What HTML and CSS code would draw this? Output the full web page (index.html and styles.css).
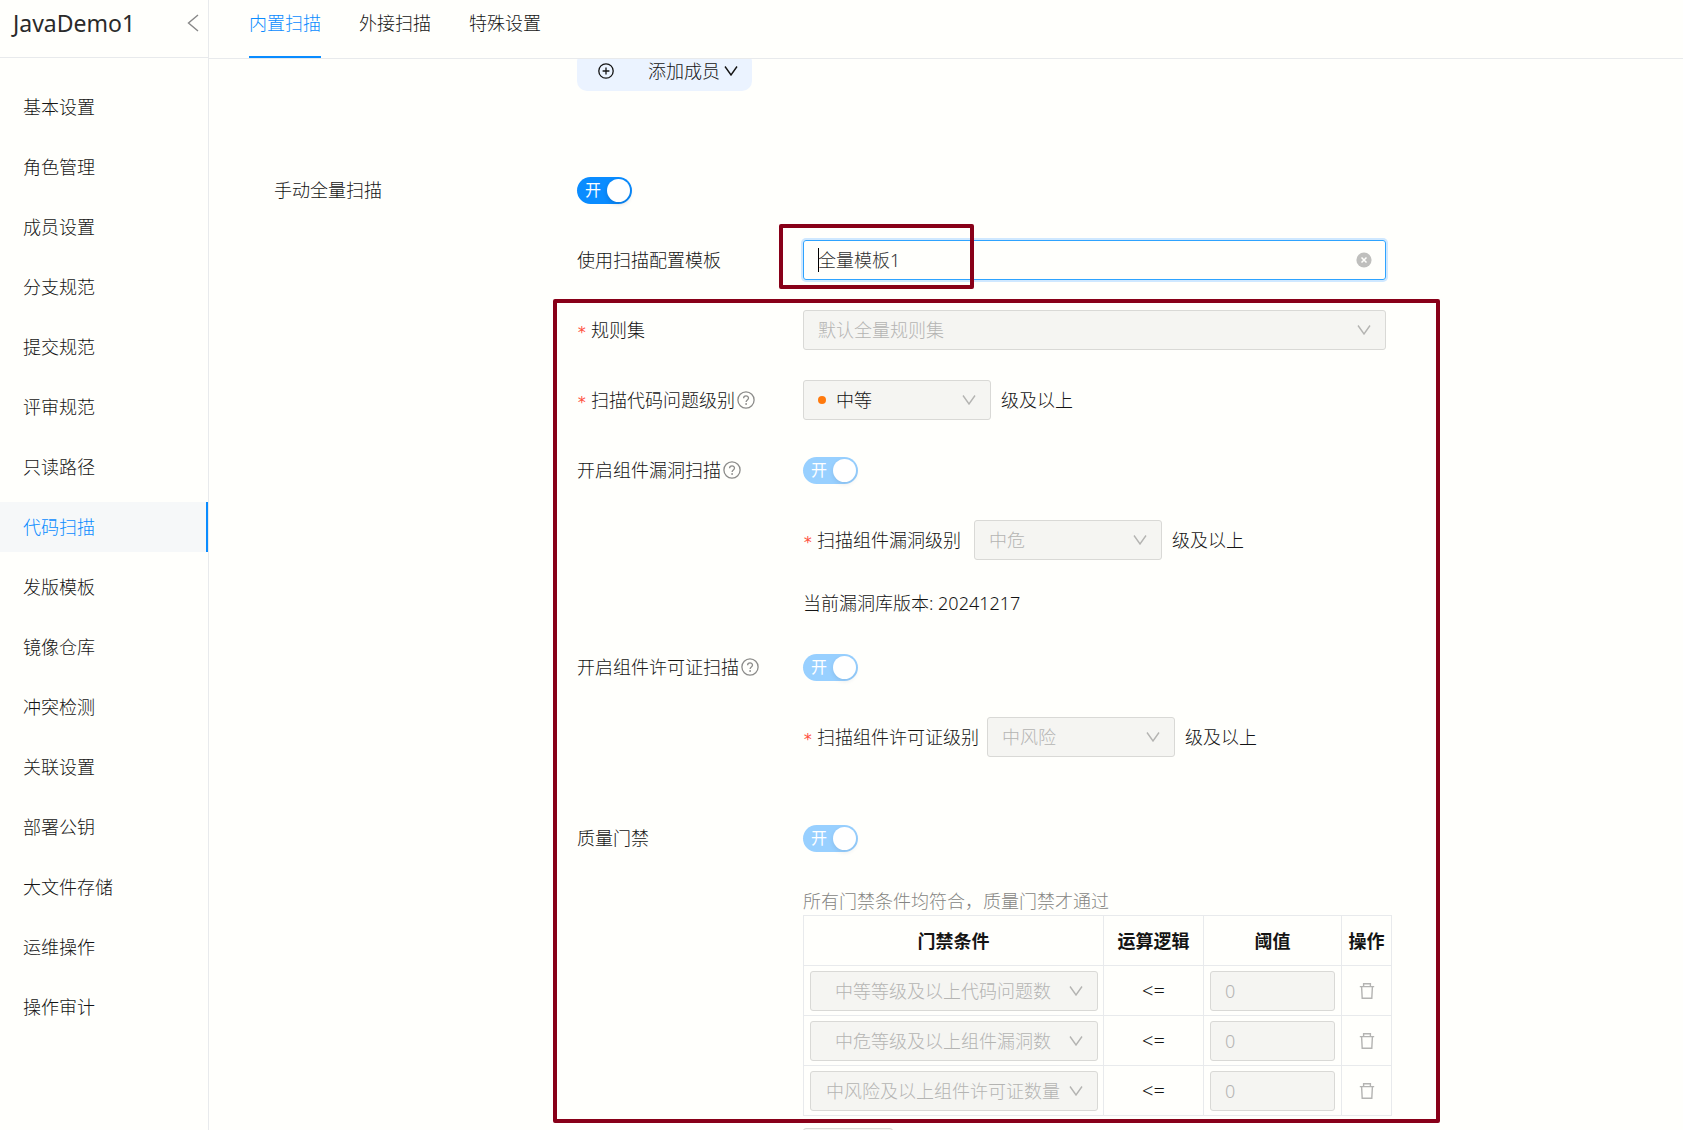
FILE: index.html
```html
<!DOCTYPE html>
<html lang="zh-CN">
<head>
<meta charset="utf-8">
<meta name="viewport" content="width=device-width, initial-scale=1">
<title>JavaDemo1 - 代码扫描</title>
<link rel="stylesheet" href="styles.css">
</head>
<body>
<svg class="sprite" aria-hidden="true">
  <symbol id="down" viewBox="0 0 14 10"><path d="M1 0.5 L7 9 L13 0.5" fill="none" stroke="currentColor" stroke-width="1.4"/></symbol>
  <symbol id="help" viewBox="0 0 18 18"><circle cx="9" cy="9" r="8.1" fill="none" stroke="currentColor" stroke-width="1.3"/><path d="M6.6 7.3 C6.6 4.1 11.5 4.2 11.5 7.1 C11.5 9 9.1 8.9 9.1 11" fill="none" stroke="currentColor" stroke-width="1.3"/><circle cx="9.1" cy="13" r="0.9" fill="currentColor"/></symbol>
  <symbol id="trash" viewBox="0 0 16 16"><path d="M0.8 3.6 H15.2 M4.6 3.4 V0.8 H11.4 V3.4 M2.6 3.8 L3.2 15.2 H12.8 L13.4 3.8" fill="none" stroke="currentColor" stroke-width="1.4"/></symbol>
</svg>
<div class="app">
  <aside class="sidebar">
    <header class="sidebar-head">
      <h1 class="project">JavaDemo1</h1>
      <button class="collapse" type="button" aria-label="收起">
        <svg width="12" height="18" viewBox="0 0 12 18"><path d="M11 1 L1.5 9 L11 17" fill="none" stroke="currentColor" stroke-width="1.4"/></svg>
      </button>
    </header>
    <nav class="menu">
      <a class="menu-item" href="#">基本设置</a>
      <a class="menu-item" href="#">角色管理</a>
      <a class="menu-item" href="#">成员设置</a>
      <a class="menu-item" href="#">分支规范</a>
      <a class="menu-item" href="#">提交规范</a>
      <a class="menu-item" href="#">评审规范</a>
      <a class="menu-item" href="#">只读路径</a>
      <a class="menu-item active" href="#" aria-current="page">代码扫描</a>
      <a class="menu-item" href="#">发版模板</a>
      <a class="menu-item" href="#">镜像仓库</a>
      <a class="menu-item" href="#">冲突检测</a>
      <a class="menu-item" href="#">关联设置</a>
      <a class="menu-item" href="#">部署公钥</a>
      <a class="menu-item" href="#">大文件存储</a>
      <a class="menu-item" href="#">运维操作</a>
      <a class="menu-item" href="#">操作审计</a>
    </nav>
  </aside>

  <main class="main">
    <nav class="tabs">
      <a class="tab active" href="#">内置扫描</a>
      <a class="tab" href="#">外接扫描</a>
      <a class="tab" href="#">特殊设置</a>
    </nav>
    <div class="content">
      <div class="section members">
        <div class="section-body">
          <button class="add-member" type="button">
            <svg width="16" height="16" viewBox="0 0 16 16"><circle cx="8" cy="8" r="7.2" fill="none" stroke="currentColor" stroke-width="1.3"/><path d="M8 4.6 V11.4 M4.6 8 H11.4" stroke="currentColor" stroke-width="1.3"/></svg>
            <span class="add-member-text">添加成员</span>
            <svg width="14" height="10"><use href="#down"/></svg>
          </button>
        </div>
      </div>

      <div class="section">
        <label class="section-label" for="full-scan">手动全量扫描</label>
        <div class="section-body rows">
          <div class="row"><label class="switch"><input id="full-scan" type="checkbox" checked><span>开</span></label></div>
          <div class="row">
            <label class="label" for="template">使用扫描配置模板</label>
            <div class="combo">
              <i class="caret"></i>
              <input id="template" class="combo-input" type="text" value="全量模板1">
              <button class="clear" type="button" aria-label="清除">
                <svg width="16" height="16" viewBox="0 0 16 16"><circle cx="8" cy="8" r="7.6" fill="#bfbfbd"/><path d="M5.5 5.5 L10.5 10.5 M10.5 5.5 L5.5 10.5" stroke="#fffffc" stroke-width="1.5"/></svg>
              </button>
              <div class="mark mark-template"></div>
            </div>
          </div>

          <div class="rows group">
            <div class="row">
              <label class="label" for="rules"><b class="star">*</b>规则集</label>
              <div class="select wide"><select id="rules" disabled><option>默认全量规则集</option></select><svg><use href="#down"/></svg></div>
            </div>
            <div class="row">
              <label class="label" for="code-level"><b class="star">*</b>扫描代码问题级别<svg class="help"><use href="#help"/></svg></label>
              <div class="field">
                <div class="select level dotted"><i class="dot"></i><select id="code-level" disabled><option>中等</option></select><svg><use href="#down"/></svg></div>
                <span>级及以上</span>
              </div>
            </div>
            <div class="row">
              <label class="label" for="vuln">开启组件漏洞扫描<svg class="help"><use href="#help"/></svg></label>
              <label class="switch"><input id="vuln" type="checkbox" checked disabled><span>开</span></label>
            </div>
            <div class="row">
              <div class="field sub">
                <label class="field-label" for="vuln-level"><b class="star">*</b>扫描组件漏洞级别</label>
                <div class="select level"><select id="vuln-level" disabled><option>中危</option></select><svg><use href="#down"/></svg></div>
                <span class="suffix">级及以上</span>
              </div>
            </div>
            <p class="version">当前漏洞库版本: 20241217</p>
            <div class="row">
              <label class="label" for="license">开启组件许可证扫描<svg class="help"><use href="#help"/></svg></label>
              <label class="switch"><input id="license" type="checkbox" checked disabled><span>开</span></label>
            </div>
            <div class="row">
              <div class="field sub">
                <label class="field-label" for="license-level"><b class="star">*</b>扫描组件许可证级别</label>
                <div class="select level"><select id="license-level" disabled><option>中风险</option></select><svg><use href="#down"/></svg></div>
                <span class="suffix">级及以上</span>
              </div>
            </div>
            <div class="row gate-row">
              <label class="label" for="gate">质量门禁</label>
              <label class="switch"><input id="gate" type="checkbox" checked disabled><span>开</span></label>
            </div>
            <div class="gate">
              <p class="hint">所有门禁条件均符合，质量门禁才通过</p>
              <table class="gate-table">
                <colgroup><col class="c-cond"><col class="c-op"><col class="c-val"><col class="c-act"></colgroup>
                <thead><tr><th>门禁条件</th><th>运算逻辑</th><th>阈值</th><th>操作</th></tr></thead>
                <tbody>
                  <tr>
                    <td><div class="select cond"><select aria-label="门禁条件" disabled><option>中等等级及以上代码问题数</option></select><svg><use href="#down"/></svg></div></td>
                    <td class="op">&lt;=</td>
                    <td><input class="num" aria-label="阈值" type="text" value="0" disabled></td>
                    <td><button class="trash" type="button" aria-label="删除" disabled><svg><use href="#trash"/></svg></button></td>
                  </tr>
                  <tr>
                    <td><div class="select cond"><select aria-label="门禁条件" disabled><option>中危等级及以上组件漏洞数</option></select><svg><use href="#down"/></svg></div></td>
                    <td class="op">&lt;=</td>
                    <td><input class="num" aria-label="阈值" type="text" value="0" disabled></td>
                    <td><button class="trash" type="button" aria-label="删除" disabled><svg><use href="#trash"/></svg></button></td>
                  </tr>
                  <tr>
                    <td><div class="select cond"><select aria-label="门禁条件" disabled><option>中风险及以上组件许可证数量</option></select><svg><use href="#down"/></svg></div></td>
                    <td class="op">&lt;=</td>
                    <td><input class="num" aria-label="阈值" type="text" value="0" disabled></td>
                    <td><button class="trash" type="button" aria-label="删除" disabled><svg><use href="#trash"/></svg></button></td>
                  </tr>
                </tbody>
              </table>
            </div>
            <div class="mark mark-group"></div>
          </div>
          <button class="add-cond" type="button" aria-label="新增" disabled></button>
        </div>
      </div>
    </div>
  </main>
</div>
</body>
</html>
```
FILE: styles.css
```css
:root {
  --bg: #fffffc;
  --text: #141414;
  --muted: #b4b4b2;
  --line: #e8eaec;
  --border: #d9d9d6;
  --fill: #f5f5f2;
  --blue: #0a8cff;
  --mark: #880018;
}

* { box-sizing: border-box; }

body {
  margin: 0;
  background: var(--bg);
  color: var(--text);
  font: 300 18px/28px "Noto Sans", "Noto Sans CJK SC", sans-serif;
}

button, input, select { font: inherit; color: inherit; }
button { padding: 0; border: 0; background: none; }
a { color: inherit; text-decoration: none; }
p, h1 { margin: 0; }
svg { flex: none; }
.sprite { position: absolute; width: 0; height: 0; }

.app { display: flex; height: 100vh; overflow: hidden; }

/* Sidebar */
.sidebar { flex: none; width: 209px; border-right: 1px solid var(--line); }
.sidebar-head {
  display: flex;
  justify-content: space-between;
  height: 58px;
  padding: 8px 9px 0 13px;
  border-bottom: 1px solid var(--line);
}
.project { color: #2a2a2a; font-size: 23px; line-height: 30px; font-weight: 400; }
.collapse { display: flex; align-items: center; height: 30px; color: #888; }
.menu { display: flex; flex-direction: column; gap: 10px; padding-top: 24px; }
.menu-item { height: 50px; padding-left: 23px; line-height: 50px; }
.menu-item.active {
  background: #f6f8f9;
  color: var(--blue);
  border-right: 2px solid var(--blue);
}

/* Tabs */
.main { flex: 1; min-width: 0; }
.tabs {
  position: relative;
  z-index: 1;
  display: flex;
  gap: 38px;
  height: 59px;
  padding-left: 40px;
  background: var(--bg);
  border-bottom: 1px solid var(--line);
}
.tab { height: 58px; line-height: 46px; }
.tab.active { color: var(--blue); border-bottom: 2px solid var(--blue); }

/* Settings form */
.content { padding-left: 65px; }
.section { display: flex; }
.section-label { width: 303px; line-height: 40px; }
.members { padding-left: 303px; margin: -8px 0 79px; }
.rows { display: flex; flex-direction: column; gap: 30px; }
.row { display: flex; align-items: center; height: 40px; }
.label { display: flex; align-items: center; width: 226px; }
.star {
  width: 14px;
  padding-top: 6px;
  color: #ff5040;
  font: 400 16px/20px "DejaVu Sans Mono", monospace;
}
.help { width: 18px; height: 18px; margin-left: 2px; color: #8c8c8a; }
.field { display: flex; align-items: center; gap: 10px; }
.field.sub { gap: 8px; padding-left: 226px; }
.field-label { display: flex; align-items: center; min-width: 163px; }
.suffix { padding-left: 2px; }
.version { padding-left: 226px; line-height: 27px; }

.add-member {
  display: flex;
  align-items: center;
  width: 175px;
  height: 40px;
  padding: 0 14px 0 21px;
  border-radius: 10px;
  background: #ebf3ff;
}
.add-member-text { flex: 1; padding-left: 34px; text-align: left; }

/* Switch */
.switch { display: block; position: relative; width: 55px; height: 27px; }
.switch input {
  appearance: none;
  display: flex;
  justify-content: flex-end;
  width: 55px;
  height: 27px;
  margin: 0;
  padding: 2px;
  border-radius: 14px;
  background: var(--blue);
}
.switch input::before {
  content: "";
  width: 23px;
  height: 23px;
  border-radius: 50%;
  background: #fff;
  box-shadow: 0 2px 4px rgba(0, 35, 80, 0.2);
}
.switch input:disabled { background: #98d0ff; }
.switch input:disabled::before { box-shadow: 0 2px 4px rgba(0, 35, 80, 0.1); }
.switch span {
  position: absolute;
  left: 8px;
  top: 0;
  color: #fff;
  font-size: 16px;
  font-weight: 400;
  line-height: 26px;
}

/* Text boxes and drop-downs */
.combo {
  position: relative;
  display: flex;
  align-items: center;
  width: 583px;
  height: 40px;
  padding: 0 13px 0 14px;
  border: 1px solid #2ea3ff;
  border-radius: 3px;
  box-shadow: 0 0 0 2px #cfe8ff;
}
.combo-input {
  flex: 1;
  min-width: 0;
  padding: 0;
  border: 0;
  outline: 0;
  background: none;
  color: #303030;
}
.caret { width: 1px; height: 24px; margin-right: -1px; background: #000; }
.clear { display: flex; }

.select {
  display: grid;
  grid-template-columns: 1fr 14px;
  align-items: center;
  height: 40px;
  padding-right: 14px;
  border: 1px solid var(--border);
  border-radius: 3px;
  background: var(--fill);
  color: var(--muted);
}
.select select {
  grid-area: 1 / 1;
  appearance: none;
  width: 100%;
  padding: 0 0 0 14px;
  border: 0;
  background: none;
  opacity: 1;
}
.select svg { width: 14px; height: 10px; }
.select.wide { width: 583px; }
.select.level { width: 188px; }
.select.dotted { grid-template-columns: 8px 1fr 14px; padding-left: 14px; }
.dotted select { grid-area: 1 / 2; padding-left: 10px; color: var(--text); }
.dot { width: 8px; height: 8px; border-radius: 50%; background: #ff7a0d; }
.select.cond { margin: 1px 5px 0 6px; }
.cond select { padding: 0 6px 0 12px; text-align-last: center; }

/* Quality gate */
.gate-row { margin-top: 31px; }
.gate { padding-left: 226px; }
.hint { color: #858583; line-height: 27px; }
.gate-table { width: 589px; border-collapse: collapse; table-layout: fixed; }
.gate-table th, .gate-table td {
  height: 50px;
  padding: 0;
  border: 1px solid var(--line);
  text-align: center;
}
.gate-table th { font-weight: 700; }
.gate-table .op { font-size: 20px; }
.c-cond { width: 300px; }
.c-op { width: 100px; }
.c-val { width: 138px; }
.c-act { width: 50px; }
.num {
  display: block;
  width: 125px;
  height: 40px;
  margin: 0 6px;
  padding: 0 14px;
  border: 1px solid var(--border);
  border-radius: 3px;
  background: var(--fill);
  color: var(--muted);
}
.trash { display: block; margin: 0 auto; color: var(--muted); }
.trash svg { display: block; width: 16px; height: 16px; }
.add-cond {
  width: 90px;
  height: 40px;
  margin: -18px 0 0 226px;
  border: 1px solid var(--border);
  border-radius: 3px;
  background: var(--fill);
}

/* Highlight frames drawn over the form */
.group { position: relative; width: 815px; }
.mark {
  position: absolute;
  border: 4px solid var(--mark);
  border-radius: 2px;
  pointer-events: none;
}
.mark-template { left: -25px; top: -17px; width: 195px; height: 65px; }
.mark-group { inset: -11px -48px -7px -24px; }
```
